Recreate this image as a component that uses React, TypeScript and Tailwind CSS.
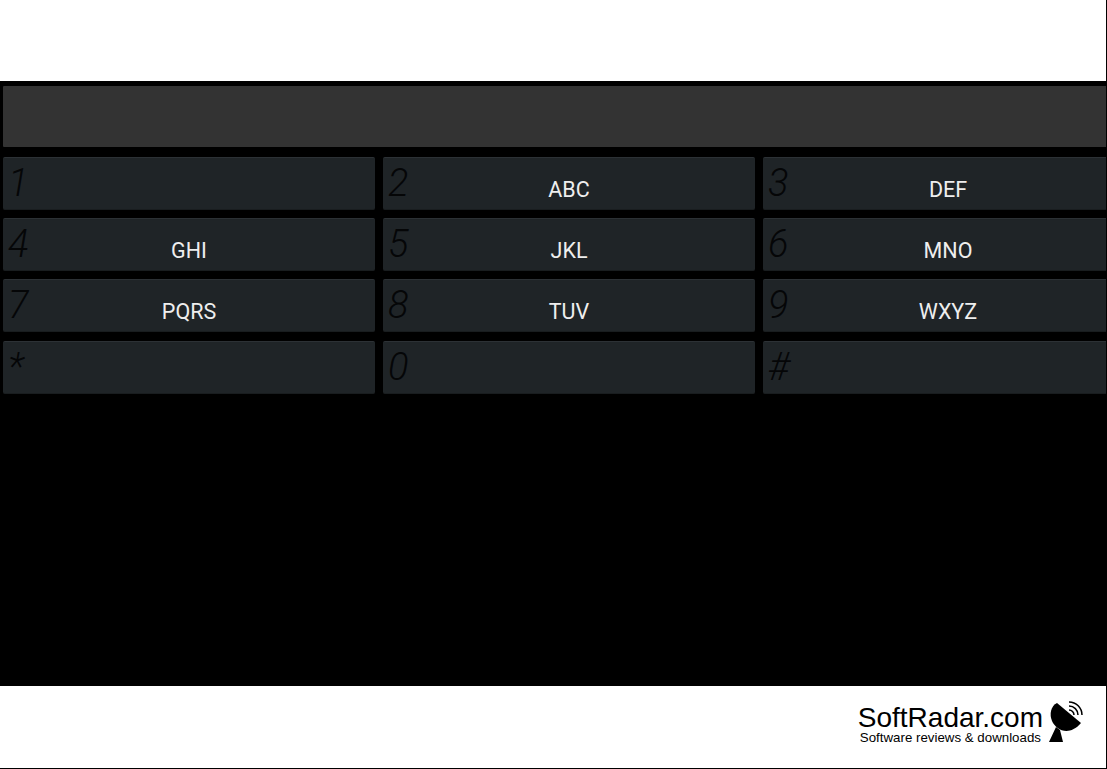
import React from 'react'

const keys = [
  { digit: '1', letters: '' },
  { digit: '2', letters: 'ABC' },
  { digit: '3', letters: 'DEF' },
  { digit: '4', letters: 'GHI' },
  { digit: '5', letters: 'JKL' },
  { digit: '6', letters: 'MNO' },
  { digit: '7', letters: 'PQRS' },
  { digit: '8', letters: 'TUV' },
  { digit: '9', letters: 'WXYZ' },
  { digit: '*', letters: '' },
  { digit: '0', letters: '' },
  { digit: '#', letters: '' },
]

function DialKey({ digit, letters }: { digit: string; letters: string }) {
  return (
    <div className="relative h-[53px] rounded-[2px] border-t border-b border-t-[#2c3135] border-b-[#191d1f] bg-[#1f2427]">
      <span className="absolute left-[5px] top-[3px] font-['Roboto',sans-serif] text-[38px] font-[350] italic leading-[44px] text-[#050607]">
        {digit}
      </span>
      {letters && (
        <span className="absolute inset-x-0 top-[19px] text-center font-['Roboto',sans-serif] text-[21.5px] leading-[26px] text-[#eeeeee]">
          {letters}
        </span>
      )}
    </div>
  )
}

function RadarIcon() {
  return (
    <svg viewBox="0 0 36 44" className="h-[44px] w-[36px]">
      <path d="M8 2 C2 5 0 13 3 20 C7 29 20 36 32 22 Z" fill="#000" />
      <path d="M7 26 L0 41 H14 L11 29 Z" fill="#000" />
      <g fill="none" stroke="#000" strokeWidth="1.5">
        <path d="M20 1 A13 13 0 0 1 33 14" />
        <path d="M20 5 A9 9 0 0 1 29 14" />
        <path d="M20 9 A5 5 0 0 1 25 14" />
      </g>
    </svg>
  )
}

export default function App() {
  return (
    <div className="flex h-[769px] w-[1107px] flex-col overflow-hidden border-b border-r border-black bg-white">
      <div className="h-[81px] shrink-0" />
      <div className="h-[605px] shrink-0 bg-black pl-[3px] pt-[5px]">
        <div className="h-[61px] w-[1110px] rounded-[1px] bg-[#333333]" />
        <div className="mt-[10px] grid grid-cols-[372px_372px_370px] gap-x-[8px] gap-y-[8.2px]">
          {keys.map((k) => (
            <DialKey key={k.digit} digit={k.digit} letters={k.letters} />
          ))}
        </div>
      </div>
      <div className="flex flex-1 items-start justify-end pr-[21px] pt-[15px]">
        <div className="flex flex-col items-center pt-[3px]">
          <span className="font-['Liberation_Sans',sans-serif] text-[28px] leading-[27px] text-black">SoftRadar.com</span>
          <span className="font-['Liberation_Sans',sans-serif] text-[13.3px] leading-[14px] text-black">
            Software reviews &amp; downloads
          </span>
        </div>
        <div className="ml-[6px]">
          <RadarIcon />
        </div>
      </div>
    </div>
  )
}
